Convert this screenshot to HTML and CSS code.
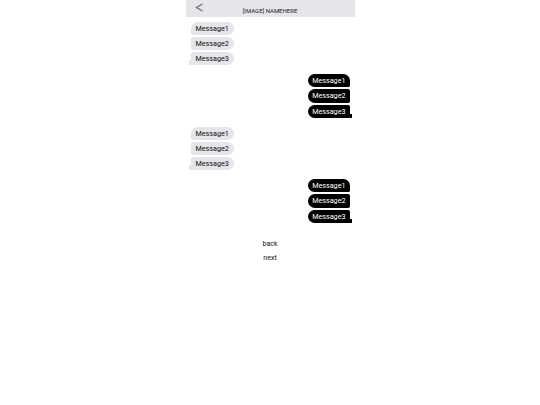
FILE: index.html
```html
<!DOCTYPE html>
<html>
<head>
<meta charset="utf-8">
<link rel="stylesheet" href="styles.css">
</head>
<body>
<div class="phone">
  <div class="header">
    <span class="back-arrow"><svg width="9" height="9" viewBox="0 0 9 9"><path d="M7.5 1 L1.5 4.5 L7.5 8" fill="none" stroke="#6b6b70" stroke-width="1.3"/></svg></span>
    <span class="title">[IMAGE] NAMEHERE</span>
  </div>
  <div class="chat">
    <div class="group them">
      <div class="bubble first">Message1</div>
      <div class="bubble mid">Message2</div>
      <div class="bubble last">Message3</div>
    </div>
    <div class="group me">
      <div class="bubble first">Message1</div>
      <div class="bubble mid">Message2</div>
      <div class="bubble last">Message3</div>
    </div>
    <div class="group them">
      <div class="bubble first">Message1</div>
      <div class="bubble mid">Message2</div>
      <div class="bubble last">Message3</div>
    </div>
    <div class="group me">
      <div class="bubble first">Message1</div>
      <div class="bubble mid">Message2</div>
      <div class="bubble last">Message3</div>
    </div>
  </div>
  <div class="nav">
    <div class="link">back</div>
    <div class="link">next</div>
  </div>
</div>
</body>
</html>
```
FILE: styles.css
```css
html, body {
  margin: 0;
  padding: 0;
  background: #fff;
}
body {
  font-family: Roboto, "Liberation Sans", sans-serif;
  color: #000;
}
.phone {
  width: 169px;
  margin: 0 auto;
  display: flex;
  flex-direction: column;
}
.header {
  height: 17px;
  background: #e5e5ea;
  display: flex;
  align-items: center;
  position: relative;
}
.back-arrow {
  position: absolute;
  left: 9px;
  top: 3px;
  display: flex;
}
.title {
  flex: 1;
  text-align: center;
  font-size: 6px;
  color: #222;
  padding-top: 3px;
}
.chat {
  display: flex;
  flex-direction: column;
  padding: 5px 5px 0 5px;
  gap: 9px;
}
.group {
  display: flex;
  flex-direction: column;
  gap: 2px;
}
.group.them { align-items: flex-start; }
.group.me { align-items: flex-end; }
.bubble {
  position: relative;
  font-size: 7.2px;
  line-height: 9px;
  padding: 2px 5px;
  border-radius: 7px;
}
.them .bubble {
  background: #e5e5ea;
  color: #111;
}
.me .bubble {
  background: #000;
  color: #fff;
  padding: 2px 4px;
  height: 9.34px;
}
.them .bubble.mid, .them .bubble.last { border-top-left-radius: 3px; }
.them .bubble.first, .them .bubble.mid { border-bottom-left-radius: 3px; }
.me .bubble.mid, .me .bubble.last { border-top-right-radius: 2px; }
.me .bubble.first, .me .bubble.mid { border-bottom-right-radius: 2px; }
.them .bubble.last { border-bottom-left-radius: 0; }
.me .bubble.last { border-bottom-right-radius: 0; }
.them .bubble.last::before {
  content: "";
  position: absolute;
  left: -2px;
  bottom: 0;
  width: 5px;
  height: 5px;
  background: #e5e5ea;
  border-bottom-right-radius: 4px;
}
.me .bubble.last::before {
  content: "";
  position: absolute;
  right: -2px;
  bottom: 0;
  width: 4px;
  height: 4px;
  background: #000;
  border-bottom-left-radius: 3px;
}
.nav {
  display: flex;
  flex-direction: column;
  align-items: center;
  padding-top: 17.5px;
  gap: 5px;
}
.link {
  font-size: 7px;
  line-height: 9px;
  color: #111;
}
```
